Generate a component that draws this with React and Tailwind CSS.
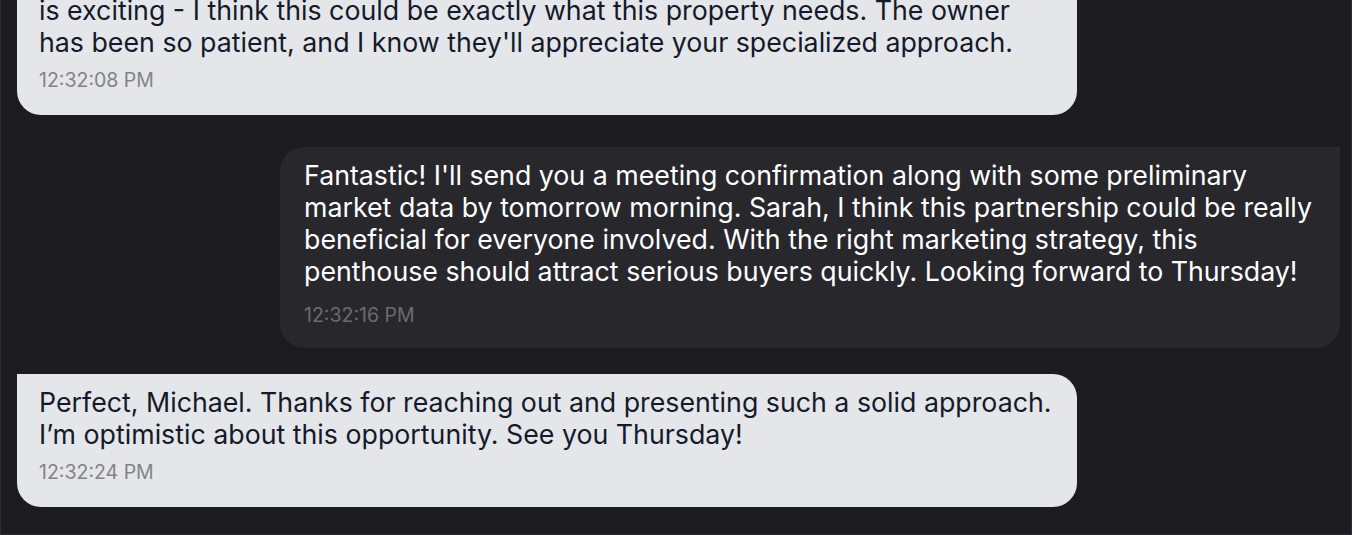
import React from "react";

const messages = [
  {
    id: 1,
    mine: false,
    lead: "Michael, I really appreciate the thought you put into this. Your plan for the listing",
    text: "is exciting - I think this could be exactly what this property needs. The owner has been so patient, and I know they'll appreciate your specialized approach.",
    time: "12:32:08 PM",
  },
  {
    id: 2,
    mine: true,
    text: "Fantastic! I'll send you a meeting confirmation along with some preliminary market data by tomorrow morning. Sarah, I think this partnership could be really beneficial for everyone involved. With the right marketing strategy, this penthouse should attract serious buyers quickly. Looking forward to Thursday!",
    time: "12:32:16 PM",
  },
  {
    id: 3,
    mine: false,
    text: "Perfect, Michael. Thanks for reaching out and presenting such a solid approach. I\u2019m optimistic about this opportunity. See you Thursday!",
    time: "12:32:24 PM",
  },
];

function Bubble({ msg }) {
  if (msg.mine) {
    return (
      <div className="flex justify-end">
        <div className="max-w-[1060px] rounded-3xl rounded-tr-none bg-[#28272c] px-6 pt-3 pb-[21px] text-white">
          <p className="text-[26.75px] leading-8">{msg.text}</p>
          <div className="mt-[16px] text-[19.5px] leading-6 text-[#6c6b71]">{msg.time}</div>
        </div>
      </div>
    );
  }
  return (
    <div className="flex justify-start">
      <div className="max-w-[1060px] rounded-3xl rounded-tl-none bg-[#e5e6ea] pl-[22px] pr-5 pt-3 pb-[23px] text-[#141a2b]">
        <p className="text-[26.75px] leading-8">
          {msg.lead && <span className="block">{msg.lead}</span>}
          {msg.text}
        </p>
        <div className="mt-[10px] text-[19.5px] leading-6 text-[#818389]">{msg.time}</div>
      </div>
    </div>
  );
}

export default function App() {
  return (
    <div
      className="h-[535px] w-[1352px] overflow-hidden bg-[#1c1b20]"
      style={{ fontFamily: "Inter, 'Noto Sans', sans-serif" }}
    >
      <div className="flex h-full flex-col border-x border-b border-[#2c2b31] pl-4 pr-[11px]">
        <div className="-mt-[50px]">
          <Bubble msg={messages[0]} />
        </div>
        <div className="mt-8">
          <Bubble msg={messages[1]} />
        </div>
        <div className="mt-[26px]">
          <Bubble msg={messages[2]} />
        </div>
      </div>
    </div>
  );
}
